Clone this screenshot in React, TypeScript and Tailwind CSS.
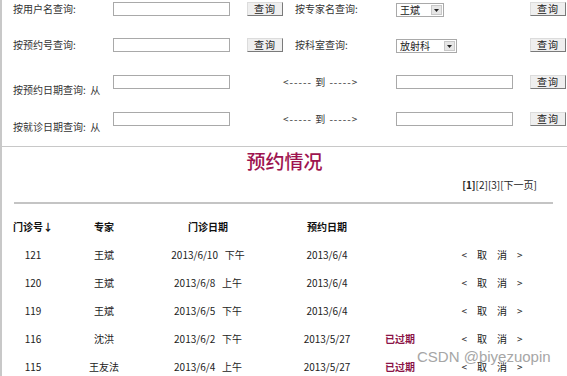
import React from "react";

const FONT = { fontFamily: '"Noto Sans CJK SC", "Liberation Sans", sans-serif' };

function Btn() {
  return (
    <div className="h-[14px] w-[36px] flex items-center justify-center bg-[#efefef] border border-t-[#dcdcdc] border-l-[#dcdcdc] border-b-[#7a7a7a] border-r-[#7a7a7a] text-[10px] leading-none tracking-[1px] text-[#222]">
      查询
    </div>
  );
}

function Input() {
  return <div className="h-[14px] w-[117px] border border-[#a9a9a9] bg-white" />;
}

function Select({ text, w }: { text: string; w: string }) {
  return (
    <div className={`h-[14px] ${w} border border-[#a9a9a9] bg-white flex items-center justify-between mt-[1px]`}>
      <span className="pl-[3px] text-[10px] leading-none text-[#222]">{text}</span>
      <span className="h-[10px] w-[11px] mr-[1px] bg-[#e6e6e6] border border-[#c8c8c8] flex items-center justify-center">
        <svg width="5" height="3" viewBox="0 0 5 3"><path d="M0 0h5L2.5 3z" fill="#222" /></svg>
      </span>
    </div>
  );
}

const rows = [
  { no: "121", doc: "王斌", d: "2013/6/10", t: "下午", r: "2013/6/4", exp: false },
  { no: "120", doc: "王斌", d: "2013/6/8", t: "上午", r: "2013/6/4", exp: false },
  { no: "119", doc: "王斌", d: "2013/6/5", t: "下午", r: "2013/6/4", exp: false },
  { no: "116", doc: "沈洪", d: "2013/6/2", t: "下午", r: "2013/5/27", exp: true },
  { no: "115", doc: "王友法", d: "2013/6/4", t: "上午", r: "2013/5/27", exp: true },
];

const grid = "grid grid-cols-[62px_80px_128px_110px_36px_148px] items-center";

export default function App() {
  return (
    <div
      style={FONT}
      className="relative w-[567px] h-[376px] overflow-hidden bg-white border-l-2 border-[#c8c8c8] text-[#333]"
    >
      {/* search form */}
      <div className="h-[147px] border-b border-[#c8c8c8] pt-[2px]">
        <div className="h-[36px] flex items-start">
          <div className="w-[111px] pl-[11px] pt-[2px] text-[10px] leading-[10px]">按用户名查询:</div>
          <Input />
          <div className="w-[17px]" />
          <Btn />
          <div className="w-[113px] pl-[12px] pt-[2px] text-[10px] leading-[10px]">按专家名查询:</div>
          <Select text="王斌" w="w-[48px]" />
          <div className="w-[86px]" />
          <Btn />
        </div>
        <div className="h-[37px] flex items-start">
          <div className="w-[111px] pl-[11px] pt-[2px] text-[10px] leading-[10px]">按预约号查询:</div>
          <Input />
          <div className="w-[17px]" />
          <Btn />
          <div className="w-[113px] pl-[12px] pt-[2px] text-[10px] leading-[10px]">按科室查询:</div>
          <Select text="放射科" w="w-[61px]" />
          <div className="w-[73px]" />
          <Btn />
        </div>
        <div className="h-[37px] flex items-start">
          <div className="w-[111px] pl-[11px] pt-[10px] text-[10px] leading-[10px] whitespace-pre">按预约日期查询:  从</div>
          <Input />
          <div className="w-[53px]" />
          <div className="w-[113px] pt-[2px] text-[10px] leading-[10px] tracking-[1px] whitespace-pre">{"<----- 到 ----->"}</div>
          <Input />
          <div className="w-[17px]" />
          <Btn />
        </div>
        <div className="h-[37px] flex items-start">
          <div className="w-[111px] pl-[11px] pt-[10px] text-[10px] leading-[10px] whitespace-pre">按就诊日期查询:  从</div>
          <Input />
          <div className="w-[53px]" />
          <div className="w-[113px] pt-[2px] text-[10px] leading-[10px] tracking-[1px] whitespace-pre">{"<----- 到 ----->"}</div>
          <Input />
          <div className="w-[17px]" />
          <Btn />
        </div>
      </div>

      {/* title */}
      <div className="pt-[4px] text-center text-[19px] leading-[20px] text-[#9e1450] font-medium">
        预约情况
      </div>
      <div className="mt-[8px] pr-[30px] flex justify-end text-[10px] leading-[12px] text-[#222]">
        <span className="font-bold">[1]</span>
        <span>[2]</span>
        <span>[3]</span>
        <span>[下一页]</span>
      </div>
      <div className="mt-[11px] ml-[12px] mr-[14px] h-[2px] bg-[#c4c4c4]" />

      {/* table */}
      <div className={`${grid} mt-[8px] h-[28px] text-[10px] font-bold text-[#111] text-center`}>
        <div>门诊号↓</div>
        <div>专家</div>
        <div>门诊日期</div>
        <div>预约日期</div>
        <div />
        <div />
      </div>
      {rows.map((r) => (
        <div key={r.no} className={`${grid} h-[28px] text-[10px] text-[#222] text-center`}>
          <div>{r.no}</div>
          <div>{r.doc}</div>
          <div className="whitespace-pre">{`${r.d}   ${r.t}`}</div>
          <div>{r.r}</div>
          <div className="font-bold text-[#8c1447] whitespace-nowrap">{r.exp ? "已过期" : ""}</div>
          <div className="flex justify-center gap-[10px]">
            <span>&lt;</span>
            <span>取</span>
            <span>消</span>
            <span>&gt;</span>
          </div>
        </div>
      ))}

      {/* watermark */}
      <div
        className="absolute left-[415px] top-[348px] text-[15px] leading-[18px] text-[#a6a6a6] whitespace-nowrap"
        style={{ fontFamily: '"Liberation Sans", Arial, sans-serif', textShadow: "0 0 2px #fff" }}
      >
        CSDN @biyezuopin
      </div>
    </div>
  );
}
